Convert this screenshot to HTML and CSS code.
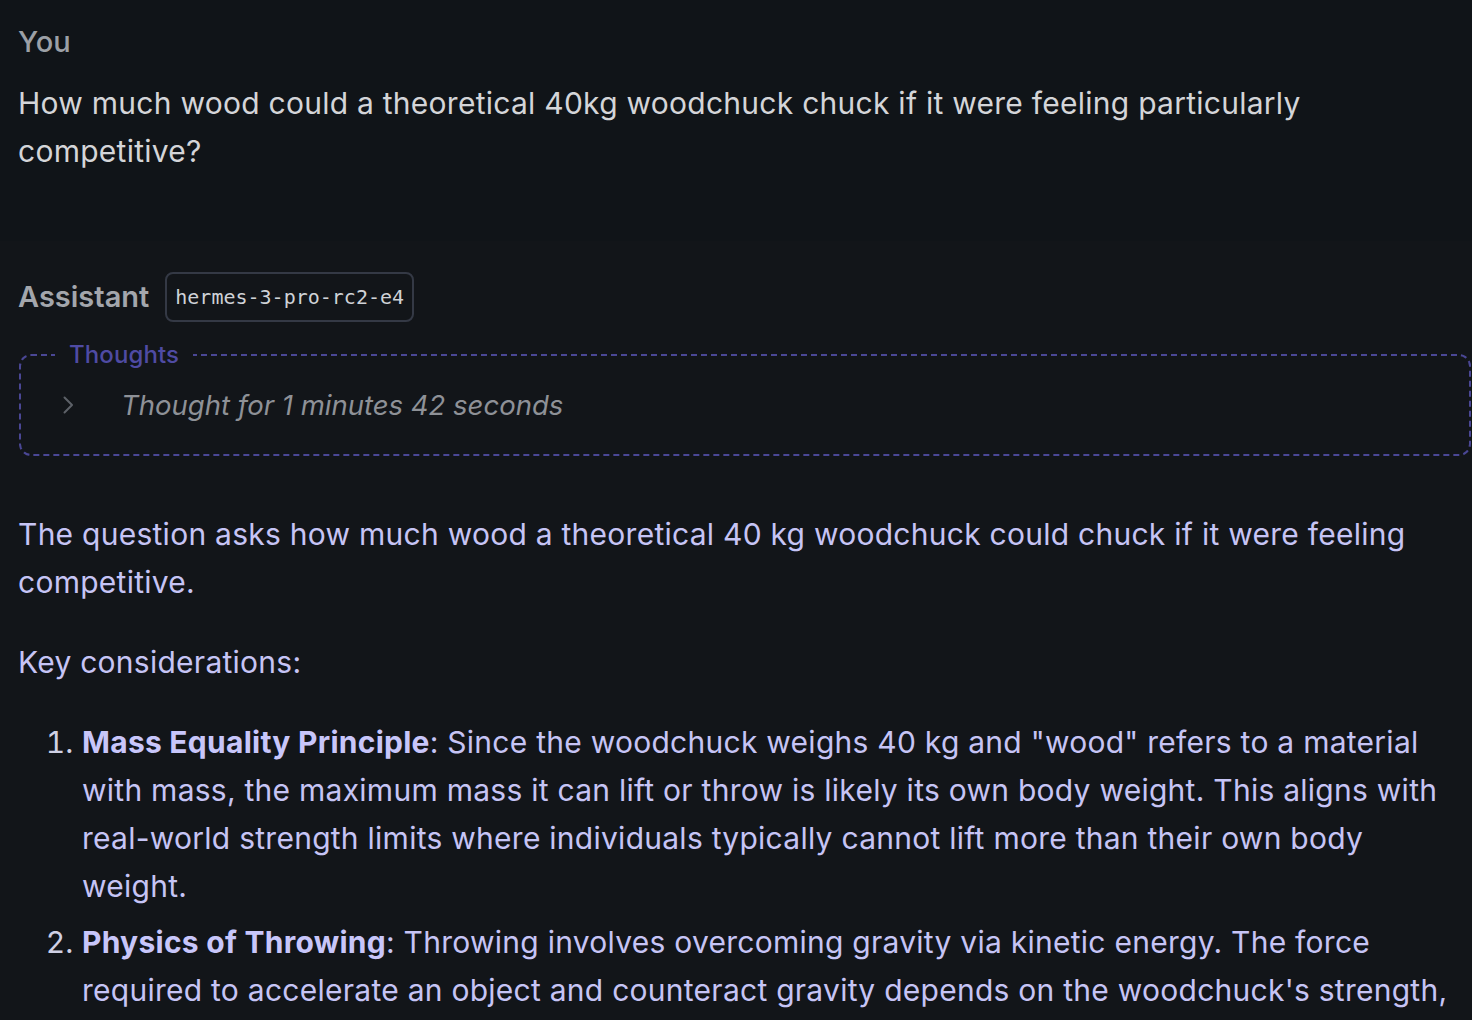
FILE: index.html
```html
<!DOCTYPE html>
<html lang="en">
<head>
<meta charset="utf-8">
<title>Chat</title>
<link rel="stylesheet" href="styles.css">
</head>
<body>
<main class="chat">
  <section class="msg msg-user">
    <div class="role">You</div>
    <div class="user-text">How much wood could a theoretical 40kg woodchuck chuck if it were feeling particularly competitive?</div>
  </section>
  <section class="msg msg-assistant">
    <div class="head">
      <span class="role role-assistant">Assistant</span>
      <span class="model">hermes-3-pro-rc2-e4</span>
    </div>
    <fieldset class="thoughts">
      <legend>Thoughts</legend>
      <div class="thought-row">
        <svg class="chev" width="24" height="24" viewBox="0 0 24 24" fill="none" stroke="currentColor" stroke-width="2" stroke-linecap="round" stroke-linejoin="round"><path d="M9.5 4.5l7.5 7.5-7.5 7.5"/></svg>
        <span class="thought-time">Thought for 1 minutes 42 seconds</span>
      </div>
    </fieldset>
    <div class="answer">
      <p>The question asks how much wood a theoretical 40 kg woodchuck could chuck if it were feeling competitive.</p>
      <p>Key considerations:</p>
      <ol>
        <li><strong>Mass Equality Principle</strong>: Since the woodchuck weighs 40 kg and "wood" refers to a material with mass, the maximum mass it can lift or throw is likely its own body weight. This aligns with real-world strength limits where individuals typically cannot lift more than their own body weight.</li>
        <li><strong>Physics of Throwing</strong>: Throwing involves overcoming gravity via kinetic energy. The force required to accelerate an object and counteract gravity depends on the woodchuck's strength, leverage and technique, which for a competitive woodchuck would be at their peak.</li>
      </ol>
    </div>
  </section>
</main>
</body>
</html>
```
FILE: styles.css
```css
html, body {
  margin: 0;
  padding: 0;
  background: #121519;
}
body {
  font-family: Inter, "Noto Sans", "Liberation Sans", sans-serif;
  font-size: 30px;
  line-height: 48px;
  letter-spacing: 0.26px;
  color: #d4d5d8;
  overflow: hidden;
  height: 1020px;
}
.chat {
  display: flex;
  flex-direction: column;
}
.msg-user {
  background: #101418;
  padding: 18px 18px 66px 18px;
}
.role {
  color: #9ca0a6;
  font-weight: 500;
  font-size: 29px;
  letter-spacing: 0;
  margin-bottom: 13px;
}
.user-text {
  color: #d4d5d8;
}
.msg-assistant {
  background: #121519;
  padding: 31px 0 0 18px;
}
.head {
  display: flex;
  align-items: center;
  gap: 16px;
}
.role-assistant {
  margin: 0;
  font-weight: 600;
  color: #a3a6ac;
}
.model {
  font-family: "DejaVu Sans Mono", "Liberation Mono", monospace;
  font-size: 20px;
  line-height: 24px;
  letter-spacing: 0;
  color: #cfd2d7;
  border: 2px solid #343945;
  border-radius: 8px;
  padding: 11px 8px 11px 8px;
}
.thoughts {
  margin: 15px 1px 0 1px;
  border: 2px dashed #4a4795;
  border-radius: 12px;
  padding: 8px 34px 25px 34px;
}
.thoughts legend {
  color: #4f4ba3;
  font-size: 24px;
  font-weight: 500;
  line-height: 36px;
  letter-spacing: 0.1px;
  padding: 0 14px;
}
.thought-row {
  display: flex;
  align-items: center;
}
.chev {
  color: #5d6168;
  margin-left: 0;
  flex: none;
}
.thought-time {
  font-style: italic;
  font-size: 27.5px;
  letter-spacing: 0;
  color: #8e9197;
  margin-left: 42px;
}
.answer {
  color: #c6c4f5;
  padding-top: 54px;
  padding-right: 18px;
}
.answer p {
  margin: 0 0 32px 0;
}
.answer ol {
  margin: 0;
  padding-left: 64px;
}
.answer li {
  margin-bottom: 8px;
}
.answer li::marker {
  color: #cfd0e4;
}
.answer strong {
  font-weight: 700;
  color: #c8c6fa;
}
```
